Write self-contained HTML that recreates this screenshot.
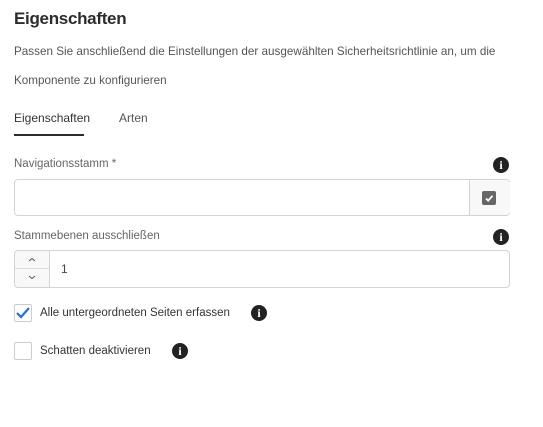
<!DOCTYPE html><html><head><style>
body{margin:0;width:543px;height:427px;background:#fff;font-family:"Liberation Sans",sans-serif;color:#4b4b4b;position:relative;overflow:hidden}
.a{position:absolute;white-space:nowrap}
.i{position:absolute;width:16px;height:16px;border-radius:50%;background:#222;color:#fff;font:bold 12px/16px "Liberation Serif",serif;text-align:center}
</style></head><body>
<div class="a" style="left:14px;top:9px;font-size:17px;color:#2c2c2c;font-weight:bold;letter-spacing:-0.3px">Eigenschaften</div>
<div class="a" style="left:14px;top:45px;font-size:11.7px;color:#555">Passen Sie anschließend die Einstellungen der ausgewählten Sicherheitsrichtlinie an, um die</div>
<div class="a" style="left:14px;top:74px;font-size:11.7px;color:#555">Komponente zu konfigurieren</div>
<div class="a" style="left:14px;top:111px;font-size:12px;color:#333">Eigenschaften</div>
<div class="a" style="left:119px;top:111px;font-size:12px;color:#555">Arten</div>
<div class="a" style="left:14px;top:134px;width:70px;height:2px;background:#2c2c2c"></div>
<div class="a" style="left:14px;top:158px;font-size:11.5px;color:#666">Navigationsstamm *</div>
<div class="i" style="left:493px;top:157px">i</div>
<div class="a" style="left:14px;top:179px;width:494px;height:35px;border:1px solid #d3d3d3;border-radius:4px"></div>
<div class="a" style="left:469px;top:180px;width:40px;height:35px;border-left:1px solid #d3d3d3;background:#f8f8f8;border-radius:0 4px 4px 0"></div>
<div class="a" style="left:482px;top:191px;width:14px;height:14px;background:#666;border-radius:2px"></div>
<svg class="a" style="left:482px;top:191px" width="14" height="14"><path d="M4 7.5 L6.2 9.7 L10.5 4.8" stroke="#fff" stroke-width="1.8" fill="none"/></svg>
<div class="a" style="left:14px;top:230px;font-size:11.5px;color:#666">Stammebenen ausschließen</div>
<div class="i" style="left:493px;top:229px">i</div>
<div class="a" style="left:14px;top:250px;width:494px;height:36px;border:1px solid #d3d3d3;border-radius:4px"></div>
<div class="a" style="left:15px;top:251px;width:34px;height:36px;border-right:1px solid #d3d3d3;background:#f8f8f8;border-radius:4px 0 0 4px"></div>
<div class="a" style="left:15px;top:268px;width:34px;height:1px;background:#ddd"></div>
<svg class="a" style="left:15px;top:251px" width="34" height="36"><path d="M14 10 L17 7.5 L20 10 M14 25 L17 27.5 L20 25" stroke="#555" stroke-width="1" fill="none"/></svg>
<div class="a" style="left:61px;top:262px;font-size:12px;color:#444">1</div>
<div class="a" style="left:14px;top:304px;width:16px;height:16px;border:1px solid #ccc;border-radius:2px"></div>
<svg class="a" style="left:14px;top:304px" width="18" height="18"><path d="M3 9 L7 13 L15 4" stroke="#2a6fd6" stroke-width="2.2" fill="none"/></svg>
<div class="a" style="left:40px;top:307px;font-size:11.5px;color:#333">Alle untergeordneten Seiten erfassen</div>
<div class="i" style="left:251px;top:305px">i</div>
<div class="a" style="left:14px;top:342px;width:16px;height:16px;border:1px solid #ccc;border-radius:2px"></div>
<div class="a" style="left:40px;top:345px;font-size:11.5px;color:#333">Schatten deaktivieren</div>
<div class="i" style="left:172px;top:343px">i</div>
</body></html>
